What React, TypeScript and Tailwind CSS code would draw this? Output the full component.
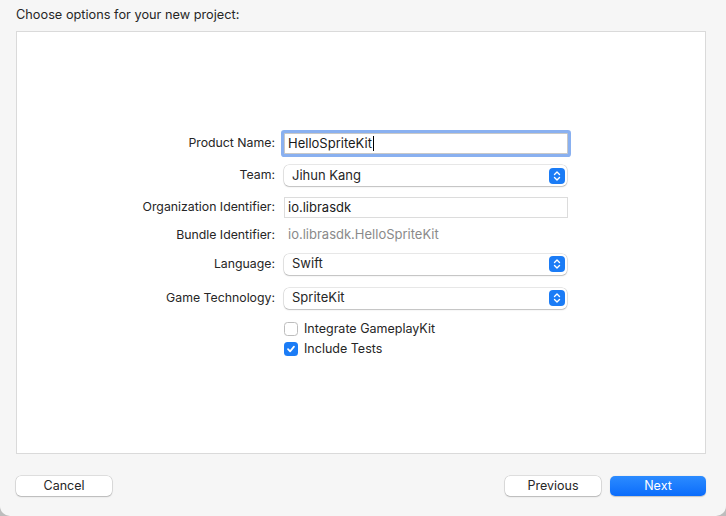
import React from "react";

function Stepper() {
  return (
    <div className="w-4 h-4 rounded-[4px] bg-[#1b7cf6] flex items-center justify-center">
      <svg width="8" height="12" viewBox="0 0 8 12" fill="none">
        <path d="M1.5 4.5 L4 2 L6.5 4.5" stroke="white" strokeWidth="1.4" strokeLinecap="round" strokeLinejoin="round" />
        <path d="M1.5 7.5 L4 10 L6.5 7.5" stroke="white" strokeWidth="1.4" strokeLinecap="round" strokeLinejoin="round" />
      </svg>
    </div>
  );
}

function Popup({ value }: { value: string }) {
  return (
    <div className="w-[283px] h-[21px] bg-white rounded-[5px] shadow-[0_0_0_0.5px_rgba(0,0,0,0.18),0_1px_1.5px_rgba(0,0,0,0.18)] flex items-center pl-[8px] pr-[2px] justify-between">
      <span className="text-[13px] text-[#262626]">{value}</span>
      <Stepper />
    </div>
  );
}

function Label({ children }: { children: React.ReactNode }) {
  return <div className="w-[258px] text-right pr-0 text-[12.3px] text-[#262626]">{children}</div>;
}

function Row({ label, children, className }: { label: string; children: React.ReactNode; className: string }) {
  return (
    <div className={"flex items-center gap-[9px] " + className}>
      <Label>{label}</Label>
      {children}
    </div>
  );
}

function Checkbox({ checked, label, className }: { checked: boolean; label: string; className: string }) {
  return (
    <div className={"flex items-center pl-[267px] h-[14px] " + className}>
      {checked ? (
        <div className="w-[14px] h-[14px] rounded-[3.5px] bg-[#1b7cf6] flex items-center justify-center">
          <svg width="10" height="10" viewBox="0 0 10 10" fill="none">
            <path d="M2 5.2 L4.1 7.4 L8 2.6" stroke="white" strokeWidth="1.7" strokeLinecap="round" strokeLinejoin="round" />
          </svg>
        </div>
      ) : (
        <div className="w-[14px] h-[14px] rounded-[3.5px] bg-white border border-[#bdbdbd]" />
      )}
      <span className="ml-[6px] text-[12.5px] text-[#262626]">{label}</span>
    </div>
  );
}

export default function App() {
  return (
    <div className="w-[726px] h-[516px] bg-[#bdbdbd]" style={{ fontFamily: "Inter, 'Liberation Sans', sans-serif" }}>
      <div className="w-full h-full bg-[#f6f6f6] rounded-b-[10px] flex flex-col pl-4 pr-5">
        <div className="h-[31px] flex items-center text-[12.75px] text-[#262626] pb-[1px]">Choose options for your new project:</div>
        <div className="h-[423px] bg-white border border-[#dadada] flex flex-col">
          <Row label="Product Name:" className="mt-[101px] h-[21px]">
            <div className="w-[284px] h-[21px] bg-white border border-[#c8c8c8] rounded-[1px] shadow-[0_0_0_3px_rgba(98,150,235,0.75)] flex items-center pl-[3px] text-[13px] text-[#1a1a1a]">
              HelloSpriteKit<span className="inline-block w-px h-[15px] bg-black ml-px" />
            </div>
          </Row>
          <Row label="Team:" className="mt-[11px] h-[21px]">
            <Popup value="Jihun Kang" />
          </Row>
          <Row label="Organization Identifier:" className="mt-[11px] h-[21px]">
            <div className="w-[284px] h-[21px] bg-white border border-[#dcdcdc] flex items-center pl-[3px] text-[13px] text-[#1a1a1a]">io.librasdk</div>
          </Row>
          <Row label="Bundle Identifier:" className="mt-[7px] h-[20px]">
            <div className="pl-[4px] text-[13px] text-[#8a8a8a]">io.librasdk.HelloSpriteKit</div>
          </Row>
          <Row label="Language:" className="mt-[9px] h-[20px]">
            <Popup value="Swift" />
          </Row>
          <Row label="Game Technology:" className="mt-[14px] h-[20px]">
            <Popup value="SpriteKit" />
          </Row>
          <Checkbox checked={false} label="Integrate GameplayKit" className="mt-[14px]" />
          <Checkbox checked={true} label="Include Tests" className="mt-[6px]" />
        </div>
        <div className="mt-[22px] flex items-center">
          <button className="w-[96px] h-[20px] bg-white rounded-[5px] shadow-[0_0_0_0.5px_rgba(0,0,0,0.18),0_1px_1.5px_rgba(0,0,0,0.18)] text-[12.5px] text-[#262626] flex items-center justify-center">Cancel</button>
          <div className="flex-1" />
          <button className="w-[96px] h-[20px] bg-white rounded-[5px] shadow-[0_0_0_0.5px_rgba(0,0,0,0.18),0_1px_1.5px_rgba(0,0,0,0.18)] text-[12.5px] text-[#262626] flex items-center justify-center">Previous</button>
          <button className="ml-[9px] w-[96px] h-[20px] rounded-[5px] bg-gradient-to-b from-[#2b8bff] to-[#0b6cfb] shadow-[0_0.5px_1px_rgba(0,0,0,0.2)] text-[12.5px] text-white flex items-center justify-center">Next</button>
        </div>
      </div>
    </div>
  );
}
